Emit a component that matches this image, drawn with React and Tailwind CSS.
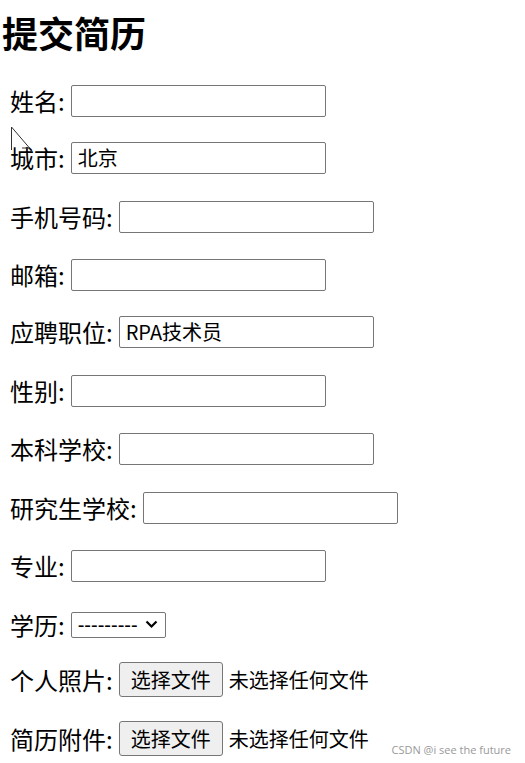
import React from "react";

const rows = [
  { label: "姓名:", value: "", mt: "mt-[0px]" },
  { label: "城市:", value: "北京", mt: "mt-[23px]" },
  { label: "手机号码:", value: "", mt: "mt-[25px]" },
  { label: "邮箱:", value: "", mt: "mt-[24px]" },
  { label: "应聘职位:", value: "RPA技术员", mt: "mt-[23px]" },
  { label: "性别:", value: "", mt: "mt-[25px]" },
  { label: "本科学校:", value: "", mt: "mt-[24px]" },
  { label: "研究生学校:", value: "", mt: "mt-[25px]" },
  { label: "专业:", value: "", mt: "mt-[24px]" },
];

function Input({ value }) {
  return (
    <div className="ml-[6px] flex h-[32px] w-[255px] items-center rounded-[2px] border border-[#767676] bg-white pl-[6px] text-[20px] leading-none text-black">
      {value}
    </div>
  );
}

function FileRow({ label, mt }) {
  return (
    <div className={`flex h-[34px] items-center ${mt}`}>
      <span>{label}</span>
      <div className="ml-[6px] flex h-[35px] w-[104px] items-center justify-center rounded-[3px] border border-[#767676] bg-[#efefef] text-[20px] leading-none text-black">
        选择文件
      </div>
      <span className="ml-[6px] text-[20px] leading-none">未选择任何文件</span>
    </div>
  );
}

export default function App() {
  return (
    <div
      className="relative h-[763px] w-[525px] overflow-hidden bg-white text-black"
      style={{ fontFamily: '"Noto Sans CJK SC", "Noto Sans", sans-serif' }}
    >
      <h1 className="mt-[12px] h-[40px] pl-[2px] text-[36px] font-bold leading-[40px]">
        提交简历
      </h1>
      <div className="mt-[32px] flex flex-col pl-[10px] text-[24px] leading-none">
        {rows.map((r) => (
          <div key={r.label} className={`flex h-[34px] items-center ${r.mt}`}>
            <span>{r.label}</span>
            <Input value={r.value} />
          </div>
        ))}
        <div className="mt-[24.5px] flex h-[34px] items-center">
          <span>学历:</span>
          <div className="ml-[6px] flex h-[26px] w-[95px] items-center justify-between rounded-[2px] border border-[#767676] bg-white pl-[6px] pr-[7px] text-[20px] leading-none">
            <span style={{ fontFamily: '"Liberation Sans", sans-serif' }}>---------</span>
            <svg width="13" height="9" viewBox="0 0 13 9">
              <path d="M1.5 1.5 L6.5 6.5 L11.5 1.5" fill="none" stroke="#000" strokeWidth="2.2" />
            </svg>
          </div>
        </div>
        <FileRow label="个人照片:" mt="mt-[21px]" />
        <FileRow label="简历附件:" mt="mt-[25px]" />
      </div>
      <svg
        className="absolute left-[10px] top-[126px]"
        width="22"
        height="26"
        viewBox="0 0 22 26"
      >
        <path d="M1.5 1 L1.5 24 M1.5 1 L19.5 22 L12 22" fill="none" stroke="#333" strokeWidth="1" />
      </svg>
      <div
        className="absolute bottom-[8px] right-[14px] text-[11px] leading-none text-[#999]"
        style={{ fontFamily: '"Open Sans", sans-serif' }}
      >
        CSDN @i see the future
      </div>
    </div>
  );
}
